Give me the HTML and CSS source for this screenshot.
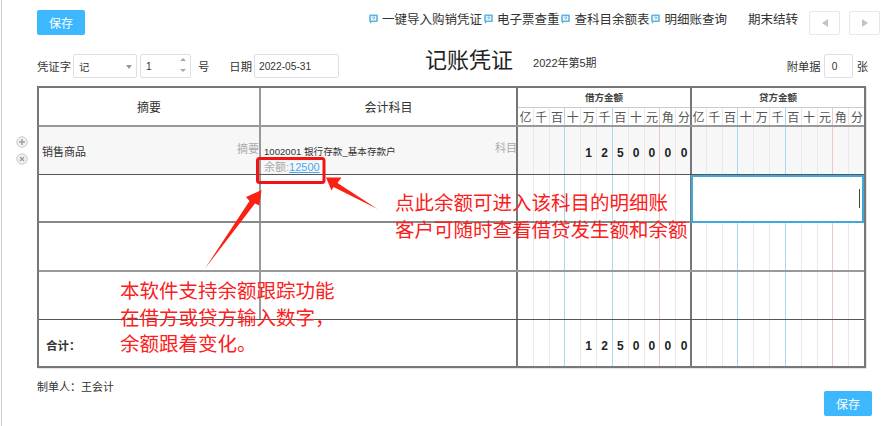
FILE: index.html
```html
<!DOCTYPE html>
<html lang="zh-CN">
<head>
<meta charset="utf-8">
<title>记账凭证</title>
<link rel="stylesheet" href="styles.css">
</head>
<body>
<main class="page">
  <header class="toolbar">
    <button class="btn">保存</button>
    <nav class="links">
      <a class="link"><svg class="help" viewBox="0 0 9 10"><path d="M1 0.5h7a.8.8 0 0 1 .8.8v6a.8.8 0 0 1-.8.8H3L1 9.7V8H1a.8.8 0 0 1-.8-.8v-6A.8.8 0 0 1 1 .5z" fill="#5fb4e0"/><rect x="1.8" y="2" width="5.4" height="4.6" fill="#e6f4fb"/><path d="M3.5 3.3q1-.8 2 0t-1 1.5v.4" fill="none" stroke="#4a9fd0" stroke-width=".8"/></svg>一键导入购销凭证</a>
      <a class="link"><svg class="help" viewBox="0 0 9 10"><path d="M1 0.5h7a.8.8 0 0 1 .8.8v6a.8.8 0 0 1-.8.8H3L1 9.7V8H1a.8.8 0 0 1-.8-.8v-6A.8.8 0 0 1 1 .5z" fill="#5fb4e0"/><rect x="1.8" y="2" width="5.4" height="4.6" fill="#e6f4fb"/><path d="M3.5 3.3q1-.8 2 0t-1 1.5v.4" fill="none" stroke="#4a9fd0" stroke-width=".8"/></svg>电子票查重</a>
      <a class="link"><svg class="help" viewBox="0 0 9 10"><path d="M1 0.5h7a.8.8 0 0 1 .8.8v6a.8.8 0 0 1-.8.8H3L1 9.7V8H1a.8.8 0 0 1-.8-.8v-6A.8.8 0 0 1 1 .5z" fill="#5fb4e0"/><rect x="1.8" y="2" width="5.4" height="4.6" fill="#e6f4fb"/><path d="M3.5 3.3q1-.8 2 0t-1 1.5v.4" fill="none" stroke="#4a9fd0" stroke-width=".8"/></svg>查科目余额表</a>
      <a class="link"><svg class="help" viewBox="0 0 9 10"><path d="M1 0.5h7a.8.8 0 0 1 .8.8v6a.8.8 0 0 1-.8.8H3L1 9.7V8H1a.8.8 0 0 1-.8-.8v-6A.8.8 0 0 1 1 .5z" fill="#5fb4e0"/><rect x="1.8" y="2" width="5.4" height="4.6" fill="#e6f4fb"/><path d="M3.5 3.3q1-.8 2 0t-1 1.5v.4" fill="none" stroke="#4a9fd0" stroke-width=".8"/></svg>明细账查询</a>
      <a class="link closing">期末结转</a>
      <button class="nav-btn"><span class="tri tri-left"></span></button>
      <button class="nav-btn"><span class="tri tri-right"></span></button>
    </nav>
  </header>

  <section class="form-row">
    <span class="label">凭证字</span>
    <span class="field f-select">记<span class="caret"></span></span>
    <span class="field f-number">1<span class="spin"><i class="up"></i><i class="down"></i></span></span>
    <span class="label l-hao">号</span>
    <span class="label l-date">日期</span>
    <span class="field f-date">2022-05-31</span>
    <h1 class="title">记账凭证</h1>
    <span class="period">2022年第5期</span>
    <span class="label l-attach">附单据</span>
    <span class="field f-attach">0</span>
    <span class="label l-zhang">张</span>
  </section>

  <section class="voucher">
    <div class="row head">
      <div class="cell c-sum center">摘要</div>
      <div class="cell c-sub center">会计科目</div>
      <div class="cell c-amt amt-head">
        <div class="amt-title">借方金额</div>
        <div class="digits units"><i>亿</i><i>千</i><i>百</i><i>十</i><i>万</i><i>千</i><i>百</i><i>十</i><i>元</i><i>角</i><i>分</i></div>
      </div>
      <div class="cell c-amt amt-head last">
        <div class="amt-title">贷方金额</div>
        <div class="digits units"><i>亿</i><i>千</i><i>百</i><i>十</i><i>万</i><i>千</i><i>百</i><i>十</i><i>元</i><i>角</i><i>分</i></div>
      </div>
    </div>

    <div class="row r-line filled">
      <div class="cell c-sum sum-filled"><span>销售商品</span><em class="hint">摘要</em></div>
      <div class="cell c-sub sub-filled">
        <span class="sub-name">1002001 银行存款_基本存款户</span>
        <span class="balance">余额:<a>12500</a></span>
        <em class="hint hint-sub">科目</em>
      </div>
      <div class="cell c-amt"><div class="digits vals"><i></i><i></i><i></i><i></i><i>1</i><i>2</i><i>5</i><i>0</i><i>0</i><i>0</i><i>0</i></div></div>
      <div class="cell c-amt last"><div class="digits"><i></i><i></i><i></i><i></i><i></i><i></i><i></i><i></i><i></i><i></i><i></i></div></div>
      <div class="row-tools">
        <svg viewBox="0 0 12 12"><circle cx="6" cy="6" r="5.2" fill="#f2f2f2" stroke="#c8c8c8"/><path d="M3 6h6M6 3v6" stroke="#a0a0a0" stroke-width="1.5"/></svg>
        <svg viewBox="0 0 12 12"><circle cx="6" cy="6" r="5.2" fill="#f2f2f2" stroke="#c8c8c8"/><path d="M4 4l4 4M8 4l-4 4" stroke="#a0a0a0" stroke-width="1.5"/></svg>
      </div>
    </div>

    <div class="row r-line r-second">
      <div class="cell c-sum"></div>
      <div class="cell c-sub"></div>
      <div class="cell c-amt"><div class="digits"><i></i><i></i><i></i><i></i><i></i><i></i><i></i><i></i><i></i><i></i><i></i></div></div>
      <div class="cell c-amt last active"><span class="text-caret"></span></div>
    </div>

    <div class="row r-line r-third">
      <div class="cell c-sum"></div>
      <div class="cell c-sub"></div>
      <div class="cell c-amt"><div class="digits"><i></i><i></i><i></i><i></i><i></i><i></i><i></i><i></i><i></i><i></i><i></i></div></div>
      <div class="cell c-amt last"><div class="digits"><i></i><i></i><i></i><i></i><i></i><i></i><i></i><i></i><i></i><i></i><i></i></div></div>
    </div>

    <div class="row r-line r-fourth">
      <div class="cell c-sum"></div>
      <div class="cell c-sub"></div>
      <div class="cell c-amt"><div class="digits"><i></i><i></i><i></i><i></i><i></i><i></i><i></i><i></i><i></i><i></i><i></i></div></div>
      <div class="cell c-amt last"><div class="digits"><i></i><i></i><i></i><i></i><i></i><i></i><i></i><i></i><i></i><i></i><i></i></div></div>
    </div>

    <div class="row r-total">
      <div class="cell c-total">合计<span class="tc">：</span></div>
      <div class="cell c-amt"><div class="digits vals"><i></i><i></i><i></i><i></i><i>1</i><i>2</i><i>5</i><i>0</i><i>0</i><i>0</i><i>0</i></div></div>
      <div class="cell c-amt last"><div class="digits"><i></i><i></i><i></i><i></i><i></i><i></i><i></i><i></i><i></i><i></i><i></i></div></div>
    </div>
  </section>

  <footer class="foot">
    <div class="maker">制单人<span class="tc">：</span>王会计</div>
    <button class="btn btn-end">保存</button>
  </footer>
</main>

<div class="annot">
  <svg class="marks" viewBox="0 0 896 426">
    <rect x="257.5" y="158.5" width="66.5" height="24" rx="2" fill="none" stroke="#f01414" stroke-width="3"/>
    <polygon points="205,268.5 249.5,201 246,197 261.5,190 259.3,205.5 255,203.5" fill="#fb2014"/>
    <polygon points="326,177.5 341.5,177.5 337.5,183 377.5,209 333.5,187 331.5,190.5" fill="#fb2014"/>
  </svg>
  <p class="note note-a">点此余额可进入该科目的明细账<br>客户可随时查看借贷发生额和余额</p>
  <p class="note note-b">本软件支持余额跟踪功能<br>在借方或贷方输入数字<span class="tc">，</span><br>余额跟着变化。</p>
</div>
</body>
</html>
```

FILE: styles.css
```css
* { box-sizing: border-box; }
html, body { margin: 0; padding: 0; }
body {
  width: 896px; height: 426px; overflow: hidden; background: #fff; position: relative;
  font-family: "Liberation Sans", "Noto Sans CJK SC", sans-serif; font-size: 12px; color: #333;
}
.tc { font-family: "Noto Sans CJK TC", sans-serif; }
.page { height: 426px; margin-left: 1px; border-left: 1px solid #ccc; padding: 10px 0 0 35px; width: 895px; }

.toolbar { display: flex; align-items: flex-start; height: 25px; }
.btn {
  width: 48px; height: 25px; padding: 0; border: 0; border-radius: 2px; background: #3db8ff; color: #fff;
  font: 12px "Liberation Sans", "Noto Sans CJK SC", sans-serif;
}
.links { display: flex; align-items: flex-start; margin-left: auto; margin-right: 16px; }
.link { display: flex; align-items: center; height: 17px; font-size: 12.5px; color: #333; margin-left: 2px; }
.help { width: 9px; height: 10px; margin-right: 4px; margin-top: 1px; }
.closing { margin-left: 21px; margin-right: 2px; }
.nav-btn { width: 31px; height: 24px; margin: 1px 0 0 9px; padding: 0; background: #fff; border: 1px solid #e8e8e8; border-radius: 2px; display: flex; align-items: center; justify-content: center; }
.tri { width: 0; height: 0; border-top: 4px solid transparent; border-bottom: 4px solid transparent; }
.tri-left { border-right: 6px solid #c4c4c4; }
.tri-right { border-left: 6px solid #c4c4c4; }

.form-row { display: flex; align-items: center; height: 24px; margin-top: 19px; position: relative; }
.label { font-size: 11.33px; color: #333; white-space: nowrap; }
.field { display: flex; align-items: center; height: 24px; background: #fff; border: 1px solid #dcdfe6; border-radius: 2px; font-size: 10.2px; color: #333; padding-left: 4px; position: relative; }
.f-select { width: 64px; margin-left: 2px; font-size: 10.5px; padding-left: 5px; }
.caret { position: absolute; right: 4px; top: 10px; border-left: 3px solid transparent; border-right: 3px solid transparent; border-top: 4px solid #999; }
.f-number { width: 51px; margin-left: 3px; padding-left: 5px; }
.spin { position: absolute; right: 4px; top: 3px; display: flex; flex-direction: column; gap: 8px; }
.spin i { display: block; border-left: 3px solid transparent; border-right: 3px solid transparent; }
.spin .up { border-bottom: 3px solid #aaa; }
.spin .down { border-top: 3px solid #aaa; }
.l-hao { margin-left: 7px; }
.l-date { margin-left: 20px; }
.f-date { width: 85px; margin-left: 2px; }
.title { margin: -10px 0 0 86px; font-size: 22px; font-weight: 400; color: #222; line-height: 30px; }
.period { margin: -9px 0 0 20px; font-size: 11px; color: #333; }
.l-attach { margin-left: auto; }
.f-attach { width: 29px; margin-left: 3px; padding-left: 7px; }
.l-zhang { margin: 0 28px 0 4px; }

.voucher { width: 829px; height: 282px; margin-top: 8px; border: 2px solid #777; box-shadow: 1px 1px 0 #e4e4e4; display: flex; flex-direction: column; }
.row { display: flex; position: relative; }
.head { height: 39px; border-bottom: 2px solid #999; }
.r-line { height: 48px; border-bottom: 2px solid #999; }
.filled { background: #f7f7f7; border-bottom: 1px solid #555; height: 48px; }
.r-second { height: 48px; border-bottom: 2px solid #888; }
.r-third { height: 49px; }
.r-fourth { height: 48px; border-bottom: 1px solid #555; }
.r-total { flex: 1; }
.cell { position: relative; }
.c-sum { width: 222px; border-right: 2px solid #999; }
.c-sub { width: 257px; border-right: 2px solid #777; }
.c-total { width: 479px; border-right: 2px solid #777; font-weight: 700; font-size: 11.5px; padding: 17px 0 0 7px; color: #333; }
.c-amt { width: 174px; border-right: 2px solid #777; }
.last { width: 172px; border-right: 0; }
.center { display: flex; align-items: center; justify-content: center; font-size: 12px; font-weight: 400; color: #333; }
.amt-head { display: flex; flex-direction: column; }
.amt-title { height: 20px; line-height: 20px; text-align: center; font-size: 9.5px; font-weight: 700; color: #444; border-bottom: 1px solid #ccc; }
.digits { display: grid; grid-template-columns: repeat(11, 1fr); height: 100%; width: 174px; }
.last .digits { margin-left: -1px; }
.units { flex: 1; height: auto; }
.digits i { display: flex; align-items: center; justify-content: center; font-style: normal; border-right: 1px solid #e9e9e9; }
.digits i:nth-child(3), .digits i:nth-child(6) { border-right-color: #a8d8f0; }
.digits i:nth-child(9) { border-right-color: #f3c6c6; }
.digits i:last-child { border-right: 0; }
.units i { font-size: 12px; color: #555; }
.vals i { font-size: 12px; font-weight: 700; color: #222; padding-top: 5px; }
.sum-filled { display: flex; align-items: center; padding-left: 3px; font-size: 11px; color: #333; }
.hint { font-style: normal; color: #aaa; font-size: 11px; position: absolute; right: 0; top: 13px; }
.sub-filled { padding: 17px 0 0 3px; display: flex; flex-direction: column; font-size: 9.6px; line-height: 16px; }
.sub-name { color: #333; height: 15px; }
.balance { color: #aaa; font-size: 11px; }
.balance a { color: #4aa8ee; text-decoration: underline; }
.hint-sub { right: -1px; }
.row-tools { position: absolute; left: -23px; top: 9px; display: flex; flex-direction: column; gap: 5px; }
.row-tools svg { width: 12px; height: 12px; display: block; }
.active { border: 2px solid #3fa9d9; margin-left: -1px; width: 173px; height: 48px; background: #fff; z-index: 1; }
.text-caret { position: absolute; right: 2px; top: 12px; width: 1px; height: 19px; background: #444; }

.foot { display: flex; justify-content: space-between; position: relative; }
.maker { margin-top: 10px; font-size: 11px; color: #333; }
.btn-end { margin: 23px 24px 0 0; }

.annot { position: absolute; inset: 0; pointer-events: none; }
.marks { position: absolute; inset: 0; width: 896px; height: 426px; }
.note { position: absolute; margin: 0; color: #fa2020; font-size: 19.5px; white-space: nowrap; }
.note-a { left: 395px; top: 190px; line-height: 26.5px; }
.note-b { left: 120px; top: 278px; line-height: 26px; }
```
